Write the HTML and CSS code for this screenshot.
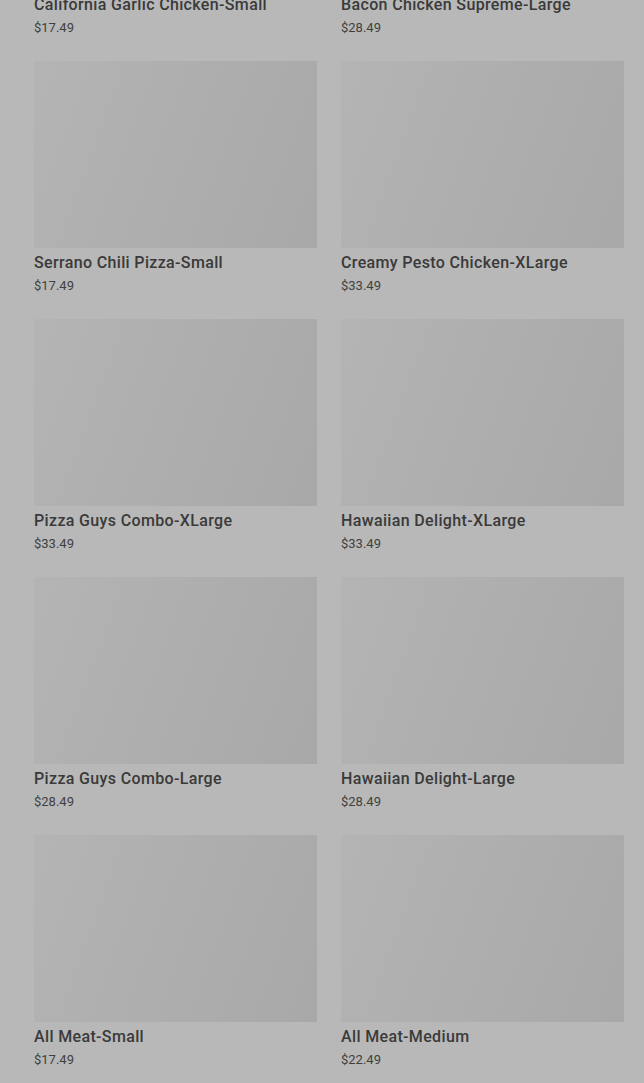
FILE: index.html
```html
<!DOCTYPE html>
<html lang="en">
<head>
    <meta charset="UTF-8">
    <meta name="viewport" content="width=device-width, initial-scale=1.0">
    <title>Menu</title>
    <link rel="stylesheet" href="styles.css">
</head>
<body>
    <div class="grid">
        <div class="item">
            <div class="thumb"></div>
            <h3 class="name">California Garlic Chicken-Small</h3>
            <p class="price">$17.49</p>
        </div>
        <div class="item">
            <div class="thumb"></div>
            <h3 class="name">Bacon Chicken Supreme-Large</h3>
            <p class="price">$28.49</p>
        </div>
        <div class="item">
            <div class="thumb"></div>
            <h3 class="name">Serrano Chili Pizza-Small</h3>
            <p class="price">$17.49</p>
        </div>
        <div class="item">
            <div class="thumb"></div>
            <h3 class="name">Creamy Pesto Chicken-XLarge</h3>
            <p class="price">$33.49</p>
        </div>
        <div class="item">
            <div class="thumb"></div>
            <h3 class="name">Pizza Guys Combo-XLarge</h3>
            <p class="price">$33.49</p>
        </div>
        <div class="item">
            <div class="thumb"></div>
            <h3 class="name">Hawaiian Delight-XLarge</h3>
            <p class="price">$33.49</p>
        </div>
        <div class="item">
            <div class="thumb"></div>
            <h3 class="name">Pizza Guys Combo-Large</h3>
            <p class="price">$28.49</p>
        </div>
        <div class="item">
            <div class="thumb"></div>
            <h3 class="name">Hawaiian Delight-Large</h3>
            <p class="price">$28.49</p>
        </div>
        <div class="item">
            <div class="thumb"></div>
            <h3 class="name">All Meat-Small</h3>
            <p class="price">$17.49</p>
        </div>
        <div class="item">
            <div class="thumb"></div>
            <h3 class="name">All Meat-Medium</h3>
            <p class="price">$22.49</p>
        </div>
    </div>
</body>
</html>
```

FILE: styles.css
```css
body {
    font-family: Roboto, 'Liberation Sans', Arial, sans-serif;
    background-color: #b8b8b8;
    margin: 0;
    padding: 0;
    overflow: hidden;
}

/* page is scrolled: first row sits partly above the viewport */
.grid {
    display: grid;
    grid-template-columns: 1fr 1fr;
    column-gap: 24px;
    row-gap: 24px;
    padding: 0 20px 0 34px;
    margin-top: -197px;
}

.item {
    display: flex;
    flex-direction: column;
}

.thumb {
    height: 187px;
    background: linear-gradient(110deg, #b4b4b4 0%, #aeaeae 50%, #a8a8a8 100%);
}

.name {
    margin: 5px 0 0;
    font-size: 16px;
    line-height: 20px;
    font-weight: 500;
    letter-spacing: 0.35px;
    color: #3a3a3a;
}

.price {
    margin: 4px 0 0;
    font-size: 13px;
    line-height: 18px;
    color: #404040;
}
```
